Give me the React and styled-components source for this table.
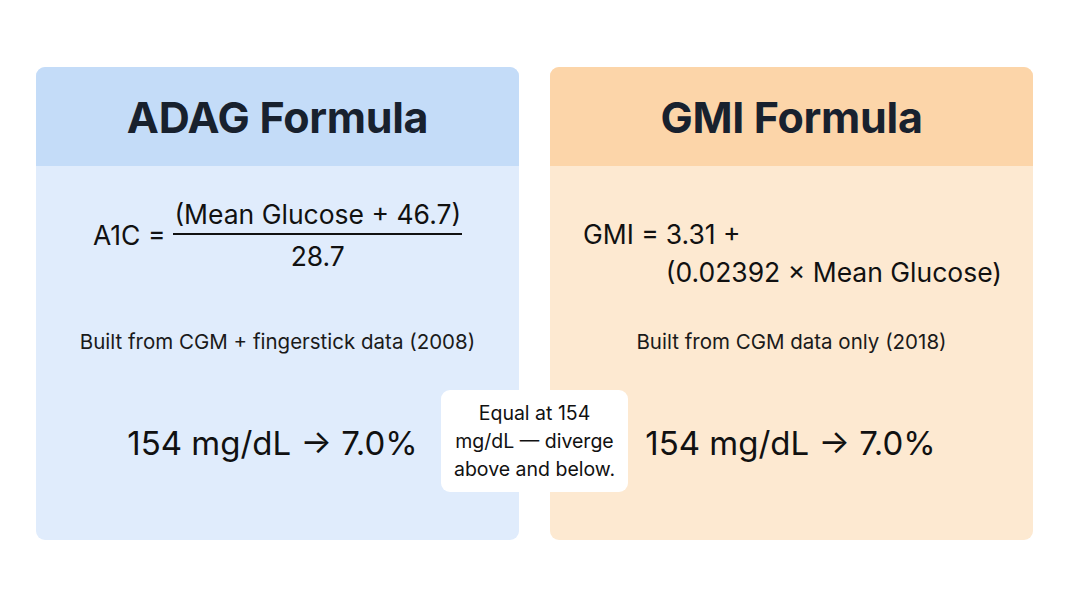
import React from "react";
import styled, { createGlobalStyle } from "styled-components";

const Global = createGlobalStyle`
  html, body { margin: 0; padding: 0; background: #ffffff; }
  body { font-family: Inter, "Noto Sans", "Liberation Sans", sans-serif; color: #111; }
`;

const Page = styled.div`
  width: 1068px;
  height: 601px;
  box-sizing: border-box;
  padding: 67px 35px 61px 36px;
`;

const Row = styled.div`
  position: relative;
  display: flex;
  gap: 31px;
  height: 473px;
`;

const Panel = styled.section`
  width: 483px;
  border-radius: 9px;
  overflow: hidden;
  display: flex;
  flex-direction: column;
  background: ${(p) => p.$body};
`;

const Header = styled.header`
  height: 99px;
  display: flex;
  align-items: center;
  justify-content: center;
  background: ${(p) => p.$bg};
`;

const Title = styled.h1`
  margin: 0;
  font-size: 43px;
  font-weight: 700;
  letter-spacing: -0.3px;
  color: #18212e;
`;

const FormulaArea = styled.div`
  height: 164px;
  box-sizing: border-box;
  padding-top: ${(p) => p.$top}px;
  display: flex;
  justify-content: center;
  align-items: flex-start;
  font-size: 26.5px;
  color: #111;
`;

const FracLine = styled.div`
  display: flex;
  align-items: center;
  gap: 8px;
`;

const Frac = styled.div`
  display: flex;
  flex-direction: column;
  align-items: center;
`;

const Num = styled.div`
  line-height: 30px;
  padding: 0 1px 4px;
  border-bottom: 2px solid #111;
`;

const Den = styled.div`
  line-height: 30px;
  padding-top: 6px;
`;

const GmiGrid = styled.div`
  display: grid;
  grid-template-columns: auto auto;
  column-gap: 7px;
  line-height: 38px;
  margin-left: 2px;
`;

const Cell = styled.div`
  grid-column: ${(p) => p.$col};
  white-space: nowrap;
`;

const Subtitle = styled.p`
  margin: 0;
  text-align: center;
  font-size: 20.5px;
  line-height: 24px;
  color: #1a1a1a;
`;

const Result = styled.p`
  margin: 71px 0 0;
  text-align: center;
  font-size: 33px;
  line-height: 36px;
  color: #111;
  padding-right: ${(p) => p.$shift || 0}px;
`;

const Callout = styled.div`
  position: absolute;
  left: 405px;
  top: 323px;
  width: 187px;
  height: 102px;
  box-sizing: border-box;
  background: #ffffff;
  border-radius: 9px;
  display: flex;
  align-items: center;
  justify-content: center;
  text-align: center;
  font-size: 19.5px;
  line-height: 28px;
  color: #111;
`;

export default function App() {
  return (
    <>
      <Global />
      <Page>
        <Row>
          <Panel $body="#e0ecfc">
            <Header $bg="#c4dcf8">
              <Title>ADAG Formula</Title>
            </Header>
            <FormulaArea $top={33}>
              <FracLine>
                <span>A1C =</span>
                <Frac>
                  <Num>(Mean Glucose + 46.7)</Num>
                  <Den>28.7</Den>
                </Frac>
              </FracLine>
            </FormulaArea>
            <Subtitle>Built from CGM + fingerstick data (2008)</Subtitle>
            <Result $shift={10}>154 mg/dL → 7.0%</Result>
          </Panel>
          <Panel $body="#fde9d1">
            <Header $bg="#fcd5a9">
              <Title>GMI Formula</Title>
            </Header>
            <FormulaArea $top={49}>
              <GmiGrid>
                <Cell $col={1}>GMI =</Cell>
                <Cell $col={2}>3.31 +</Cell>
                <Cell $col={2}>(0.02392 × Mean Glucose)</Cell>
              </GmiGrid>
            </FormulaArea>
            <Subtitle>Built from CGM data only (2018)</Subtitle>
            <Result $shift={2}>154 mg/dL → 7.0%</Result>
          </Panel>
          <Callout>
            <div>
              Equal at 154
              <br />
              mg/dL — diverge
              <br />
              above and below.
            </div>
          </Callout>
        </Row>
      </Page>
    </>
  );
}
